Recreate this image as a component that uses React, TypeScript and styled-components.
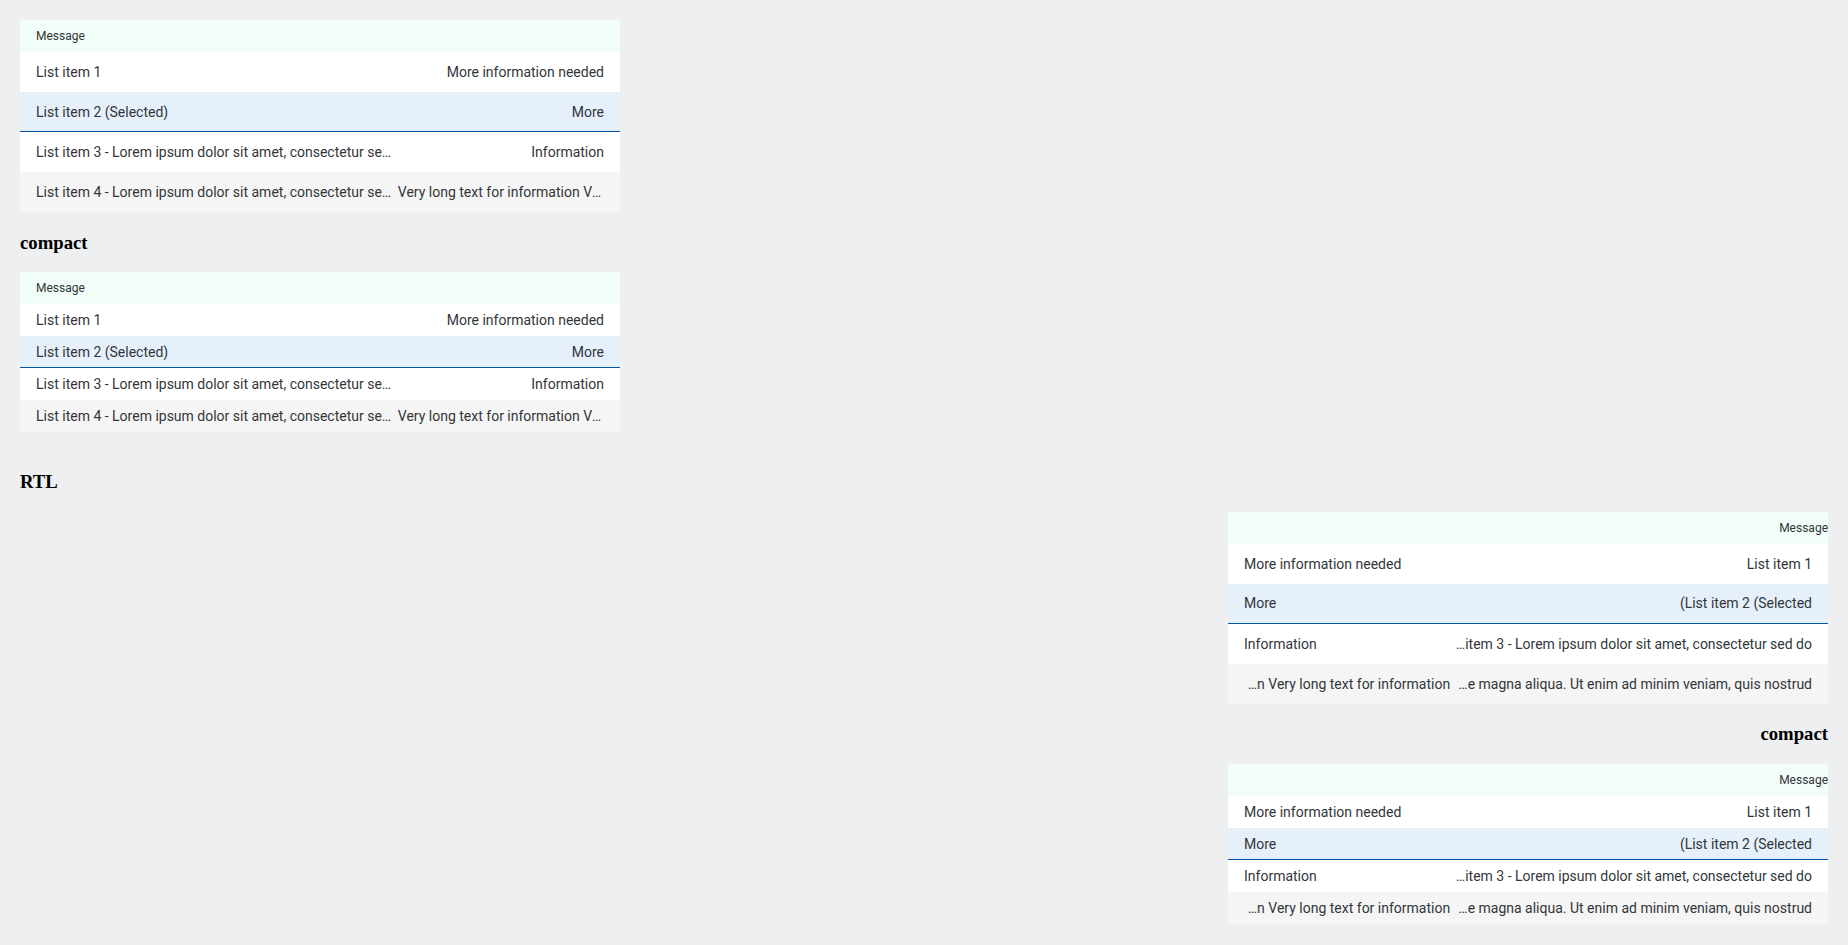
import React from 'react';
import styled, { createGlobalStyle } from 'styled-components';

const GlobalStyle = createGlobalStyle`
    html, body {
        margin: 0;
        padding: 0;
        background: #edeff0;
    }
`;

const Page = styled.div`
    display: flex;
    flex-direction: column;
    align-items: stretch;
    padding: 20px;
`;

const Heading = styled.h3<{ $gap?: boolean }>`
    margin: ${(p) => (p.$gap ? '37.44px' : '18.72px')} 0 18.72px;
    font-family: 'Liberation Serif', 'Times New Roman', serif;
    font-size: 18.72px;
    font-weight: bold;
    line-height: 23px;
    color: #000;
`;

const Rtl = styled.div`
    display: flex;
    flex-direction: column;
`;

const List = styled.ul`
    width: 600px;
    margin: 0;
    padding: 0;
    list-style: none;
    border-radius: 0 0 4px 4px;
    overflow: hidden;
    font-family: Roboto, 'Liberation Sans', Arial, sans-serif;
    color: #32363a;
`;

const ListHeader = styled.li`
    display: flex;
    align-items: center;
    height: 32px;
    padding-left: 16px;
    background: #f1fdf6;
    font-size: 12px;
    color: #32363a;
`;

const Row = styled.li<{ $compact?: boolean; $selected?: boolean; $muted?: boolean }>`
    display: flex;
    align-items: center;
    box-sizing: border-box;
    height: ${(p) => (p.$compact ? '32px' : '40px')};
    padding: 0 16px;
    font-size: 14px;
    background: ${(p) => (p.$selected ? '#e5f0fa' : p.$muted ? '#f5f5f5' : '#fff')};
    border-bottom: ${(p) => (p.$selected ? '1px solid #0854a0' : 'none')};
`;

const Title = styled.span`
    flex: 0 1 auto;
    min-width: 0;
    max-width: 63%;
    white-space: nowrap;
    overflow: hidden;
    text-overflow: ellipsis;
`;

const Secondary = styled.span`
    flex: 1 1 0;
    min-width: 0;
    margin-inline-start: 4px;
    text-align: end;
    white-space: nowrap;
    overflow: hidden;
    text-overflow: ellipsis;
`;

// keeps the opening bracket out of bracket pairing, like the old bidi rendering
const Bracket = styled.span`
    unicode-bidi: isolate;
    direction: ltr;
`;

const items = [
    { title: 'List item 1', secondary: 'More information needed' },
    {
        title: (
            <>
                List item 2 <Bracket>(</Bracket>Selected)
            </>
        ),
        secondary: 'More',
        selected: true,
    },
    { title: 'List item 3 - Lorem ipsum dolor sit amet, consectetur sed do', secondary: 'Information' },
    {
        title: 'List item 4 - Lorem ipsum dolor sit amet, consectetur sed do eiusmod tempor incididunt ut labore et dolore magna aliqua. Ut enim ad minim veniam, quis nostrud',
        secondary: 'Very long text for information Very long text for information',
        muted: true,
    },
];

const MessageList = ({ compact }: { compact?: boolean }) => (
    <List>
        <ListHeader>Message</ListHeader>
        {items.map((it, i) => (
            <Row key={i} $compact={compact} $selected={it.selected} $muted={it.muted}>
                <Title>{it.title}</Title>
                <Secondary>{it.secondary}</Secondary>
            </Row>
        ))}
    </List>
);

export default function App() {
    return (
        <>
            <GlobalStyle />
            <Page>
                <MessageList />
                <Heading>compact</Heading>
                <MessageList compact />
                <Heading $gap>RTL</Heading>
                <Rtl dir="rtl">
                    <MessageList />
                    <Heading>compact</Heading>
                    <MessageList compact />
                </Rtl>
            </Page>
        </>
    );
}
